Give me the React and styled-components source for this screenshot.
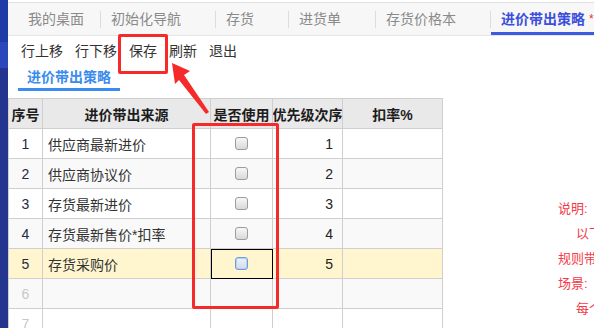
import React from "react";
import styled, { createGlobalStyle } from "styled-components";

const Global = createGlobalStyle`
  html, body { margin: 0; padding: 0; background: #fff; overflow: hidden; }
  body { font-family: "Liberation Sans", "Noto Sans CJK SC", sans-serif; font-size: 14px; color: #333; }
  * { box-sizing: border-box; }
`;

const Page = styled.div`
  display: flex;
  width: 594px;
  height: 328px;
  overflow: hidden;
  position: relative;
`;

const Sidebar = styled.div`
  width: 8px;
  flex: none;
  display: flex;
  flex-direction: column;
  background: #23358e;
`;

const SideBlock = styled.div`
  flex: none;
  height: ${(p) => p.$h}px;
  background: ${(p) => p.$c};
`;

const Main = styled.div`
  flex: 1;
  min-width: 0;
  display: flex;
  flex-direction: column;
`;

const TabBar = styled.div`
  flex: none;
  margin-top: 2px;
  height: 34px;
  border-top: 1px solid #e0e0e0;
  border-bottom: 1px solid #e6e6e6;
  background: #f7f7f7;
  display: flex;
  align-items: center;
  white-space: nowrap;
  overflow: hidden;
`;

const Tab = styled.div`
  height: 32px;
  display: flex;
  align-items: center;
  padding: ${(p) => (p.$first ? "0 16px 0 20px" : "0 34px 0 10px")};
  color: ${(p) => (p.$active ? "#3b4fdc" : "#8a8a8a")};
  font-weight: ${(p) => (p.$active ? 700 : 400)};
  border-bottom: 3px solid ${(p) => (p.$active ? "#3d5be2" : "transparent")};
  border-top: 3px solid transparent;
  flex: ${(p) => (p.$active ? 1 : "none")};
  line-height: 18px;
`;

const Star = styled.span`
  color: #f0303a;
  font-weight: 400;
  margin-left: 4px;
  font-size: 12px;
`;

const Sep = styled.div`
  width: 1px;
  height: 17px;
  background: #dcdcdc;
  flex: none;
`;

const Toolbar = styled.div`
  flex: none;
  height: 30px;
  display: flex;
  align-items: center;
  gap: 12px;
  padding-left: 13px;
  color: #333;
  white-space: nowrap;
`;

const ToolButton = styled.span`
  line-height: 18px;
  cursor: pointer;
`;

const SubTabBar = styled.div`
  flex: none;
  height: 32px;
  padding-left: 10px;
  display: flex;
  align-items: flex-start;
`;

const SubTab = styled.div`
  height: 25px;
  line-height: 22px;
  padding: 0 9px;
  font-weight: 700;
  color: #3a8cec;
  border-bottom: 3px solid #3a8cf0;
  white-space: nowrap;
`;

const Body = styled.div`
  flex: none;
  display: flex;
  align-items: flex-start;
`;

const Grid = styled.div`
  width: 435px;
  flex: none;
  border-left: 1px solid #cfcfcf;
  border-top: 1px solid #cfcfcf;
`;

const Row = styled.div`
  display: grid;
  grid-template-columns: 34px 168px 62px 70px 100px;
  height: 30px;
  background: ${(p) => p.$bg};
`;

const Cell = styled.div`
  border-right: 1px solid #cfcfcf;
  border-bottom: 1px solid #cfcfcf;
  display: flex;
  align-items: center;
  justify-content: ${(p) => p.$align || "flex-start"};
  padding: ${(p) => (p.$align === "flex-end" ? "0 9px 0 0" : p.$align === "center" ? "0" : "0 0 0 5px")};
  color: ${(p) => p.$color || "#333"};
  white-space: nowrap;
  overflow: hidden;
  ${(p) => (p.$focus ? "outline: 1px solid #000; outline-offset: -1px;" : "")}
`;

const HeadCell = styled(Cell)`
  justify-content: center;
  padding: 0;
  font-weight: 700;
  color: #1c1c1c;
  background: #e9e9e9;
`;

const Check = styled.span`
  width: 13px;
  height: 13px;
  border-radius: 3px;
  border: 1px solid ${(p) => (p.$focus ? "#6f9be0" : "#9c9c9c")};
  background: ${(p) =>
    p.$focus
      ? "linear-gradient(#eef3fb, #d3dbea)"
      : "linear-gradient(#f7f7f7, #d9d9d9)"};
  box-shadow: ${(p) => (p.$focus ? "inset 0 0 0 1px #b8d0f4" : "none")};
`;

const Notes = styled.div`
  margin-left: 115px;
  padding-top: 98px;
  color: #f43a4a;
  font-size: 13px;
  line-height: 25px;
  white-space: nowrap;
`;

const NoteLine = styled.div`
  padding-left: ${(p) => (p.$indent ? 18 : 0)}px;
`;

const Mark = styled.div`
  position: absolute;
  left: ${(p) => p.$x}px;
  top: ${(p) => p.$y}px;
  width: ${(p) => p.$w}px;
  height: ${(p) => p.$h}px;
  border: 3px solid #f52a2a;
  border-radius: 2px;
  pointer-events: none;
`;

const ArrowSvg = styled.svg`
  position: absolute;
  left: 0;
  top: 0;
  pointer-events: none;
`;

const tabs = ["初始化导航", "存货", "进货单", "存货价格本"];

const rows = [
  { n: "1", src: "供应商最新进价", p: "1" },
  { n: "2", src: "供应商协议价", p: "2" },
  { n: "3", src: "存货最新进价", p: "3" },
  { n: "4", src: "存货最新售价*扣率", p: "4" },
  { n: "5", src: "存货采购价", p: "5", sel: true },
  { n: "6", empty: true },
  { n: "7", empty: true },
];

function rowBg(i, r) {
  if (r.sel) return "#fff6cf";
  return i % 2 === 1 ? "#f9f9f9" : "#ffffff";
}

export default function App() {
  return (
    <>
      <Global />
      <Page>
        <Sidebar>
          <SideBlock $h={42} $c="#1e3ca6" />
          <SideBlock $h={26} $c="#2a47bc" />
        </Sidebar>
        <Main>
          <TabBar>
            <Tab $first>我的桌面</Tab>
            {tabs.map((t) => (
              <React.Fragment key={t}>
                <Sep />
                <Tab>{t}</Tab>
              </React.Fragment>
            ))}
            <Sep />
            <Tab $active>
              进价带出策略<Star>*</Star>
            </Tab>
          </TabBar>
          <Toolbar>
            <ToolButton>行上移</ToolButton>
            <ToolButton>行下移</ToolButton>
            <ToolButton>保存</ToolButton>
            <ToolButton>刷新</ToolButton>
            <ToolButton>退出</ToolButton>
          </Toolbar>
          <SubTabBar>
            <SubTab>进价带出策略</SubTab>
          </SubTabBar>
          <Body>
            <Grid>
              <Row $bg="#e9e9e9">
                <HeadCell>序号</HeadCell>
                <HeadCell>进价带出来源</HeadCell>
                <HeadCell>是否使用</HeadCell>
                <HeadCell>优先级次序</HeadCell>
                <HeadCell>扣率%</HeadCell>
              </Row>
              {rows.map((r, i) => (
                <Row key={r.n} $bg={rowBg(i, r)}>
                  <Cell $align="center" $color={r.empty ? "#c8c8c8" : "#1f2a44"}>
                    {r.n}
                  </Cell>
                  <Cell>{r.src || ""}</Cell>
                  <Cell $align="center" $focus={r.sel}>
                    {!r.empty && <Check $focus={r.sel} />}
                  </Cell>
                  <Cell $align="flex-end" $color="#222">
                    {r.p || ""}
                  </Cell>
                  <Cell />
                </Row>
              ))}
            </Grid>
            <Notes>
              <NoteLine>说明:</NoteLine>
              <NoteLine $indent>以下规则按优先级次序依次执行</NoteLine>
              <NoteLine>规则带出进价</NoteLine>
              <NoteLine>场景:</NoteLine>
              <NoteLine $indent>每个存货</NoteLine>
            </Notes>
          </Body>
        </Main>
        <Mark $x={118} $y={34} $w={50} $h={40} />
        <Mark $x={192} $y={123} $w={87} $h={186} />
        <ArrowSvg width="594" height="328" viewBox="0 0 594 328">
          <polygon
            points="172,63 190,71 184,75 209,112 206,114 179,80 175,84"
            fill="#f52a2a"
          />
        </ArrowSvg>
      </Page>
    </>
  );
}
